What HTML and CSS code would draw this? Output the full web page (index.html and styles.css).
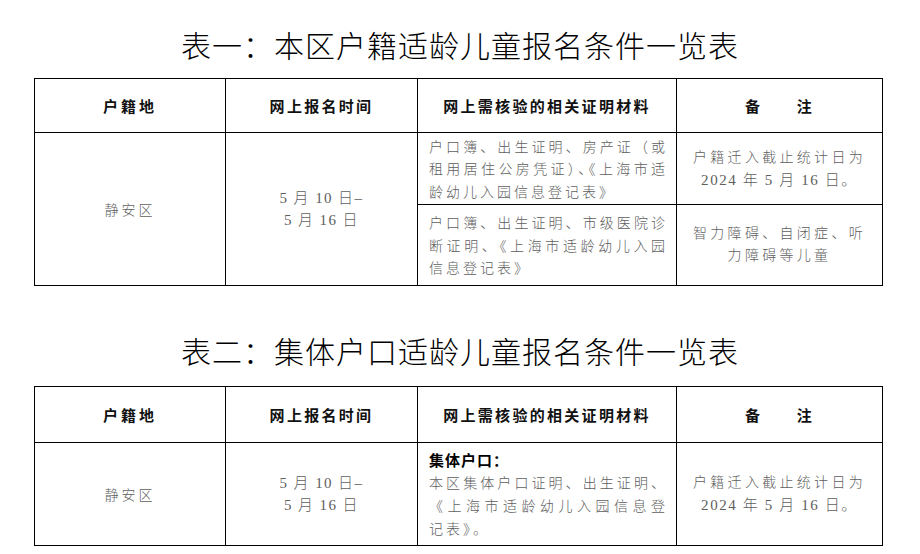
FILE: index.html
```html
<!DOCTYPE html>
<html lang="zh-CN">
<head>
<meta charset="utf-8">
<title>适龄儿童报名条件一览表</title>
<link rel="stylesheet" href="styles.css">
</head>
<body>
<main class="page">
  <h1 class="title title-first">表一：本区户籍适龄儿童报名条件一览表</h1>
  <table class="grid">
    <colgroup>
      <col class="c1"><col class="c2"><col class="c3"><col class="c4">
    </colgroup>
    <tr class="head head-1">
      <th class="h-place">户籍地</th>
      <th>网上报名时间</th>
      <th>网上需核验的相关证明材料</th>
      <th class="h-note">备　　注</th>
    </tr>
    <tr class="r1a">
      <td rowspan="2" class="place">静安区</td>
      <td rowspan="2" class="date"><span class="ln">5 月 10 日–</span><span class="ln">5 月 16 日</span></td>
      <td class="mat">
        <span class="jl">户口簿、出生证明、房产证（或</span>
        <span class="jl">租用居住公房凭证<span class="halt">）、《</span>上海市适</span>
        <span class="ll">龄幼儿入园信息登记表》</span>
      </td>
      <td class="note"><span class="ln">户籍迁入截止统计日为</span><span class="ln num">2024 年 5 月 16 日。</span></td>
    </tr>
    <tr class="r1b">
      <td class="mat">
        <span class="jl">户口簿、出生证明、市级医院诊</span>
        <span class="jl">断证明、《上海市适龄幼儿入园</span>
        <span class="ll">信息登记表》</span>
      </td>
      <td class="note"><span class="ln">智力障碍、自闭症、听</span><span class="ln">力障碍等儿童</span></td>
    </tr>
  </table>

  <h1 class="title title-second">表二：集体户口适龄儿童报名条件一览表</h1>
  <table class="grid">
    <colgroup>
      <col class="c1"><col class="c2"><col class="c3"><col class="c4">
    </colgroup>
    <tr class="head head-2">
      <th class="h-place">户籍地</th>
      <th>网上报名时间</th>
      <th>网上需核验的相关证明材料</th>
      <th class="h-note">备　　注</th>
    </tr>
    <tr class="r2">
      <td class="place">静安区</td>
      <td class="date"><span class="ln">5 月 10 日–</span><span class="ln">5 月 16 日</span></td>
      <td class="mat mat-2">
        <span class="ll strong">集体户口：</span>
        <span class="jl">本区集体户口证明、出生证明、</span>
        <span class="jl">《上海市适龄幼儿入园信息登</span>
        <span class="ll">记表》。</span>
      </td>
      <td class="note"><span class="ln">户籍迁入截止统计日为</span><span class="ln num">2024 年 5 月 16 日。</span></td>
    </tr>
  </table>
</main>
</body>
</html>
```

FILE: styles.css
```css
html, body {
  margin: 0;
  padding: 0;
  background: #ffffff;
}

body {
  font-family: "Liberation Serif", "Noto Sans CJK SC", serif;
  color: #000;
}

.page {
  width: 920px;
  display: flex;
  flex-direction: column;
}

.title {
  font-family: "Noto Sans CJK SC", sans-serif;
  font-weight: 300;
  font-size: 30px;
  letter-spacing: 1px;
  line-height: 40px;
  text-align: center;
  margin: 0;
  padding-left: 0;
  color: #000;
}

.title-first {
  margin-top: 24px;
  margin-bottom: 14px;
}

.title-second {
  margin-top: 44px;
  margin-bottom: 16px;
}

.grid {
  margin-left: 34px;
  width: 848px;
  border-collapse: collapse;
  table-layout: fixed;
}

.c1 { width: 191px; }
.c2 { width: 192px; }
.c3 { width: 259px; }
.c4 { width: 206px; }

.grid th,
.grid td {
  border: 1px solid #000;
  padding: 0;
  vertical-align: middle;
  text-align: center;
}

.grid th {
  font-family: "Noto Sans CJK SC", sans-serif;
  font-weight: 700;
  font-size: 15px;
  letter-spacing: 2.3px;
  color: #111;
}

.grid .h-place { letter-spacing: 3px; }

.head-1 { height: 54px; }
.head-2 { height: 56px; }
.r1a { height: 72px; }
.r1b { height: 81px; }
.r2 { height: 103px; }

.grid .place {
  font-family: "Noto Sans CJK SC", sans-serif;
  font-weight: 300;
  font-size: 14px;
  letter-spacing: 3px;
  color: #5e5e5e;
}

.grid .date {
  font-size: 15px;
  font-weight: 300;
  letter-spacing: 1.4px;
  color: #5e5e5e;
  line-height: 22px;
}

.ln {
  display: block;
}

.grid .mat {
  font-family: "Noto Sans CJK SC", sans-serif;
  font-weight: 300;
  font-size: 14px;
  color: #5e5e5e;
  line-height: 22.5px;
  text-align: left;
  padding: 0 11px 0 11px;
}

.grid .mat-2 {
  line-height: 23px;
}

.jl {
  display: block;
  text-align: justify;
  text-align-last: justify;
  text-justify: inter-character;
}

.ll {
  display: block;
  text-align: left;
  letter-spacing: 3px;
}

.halt {
  font-feature-settings: "halt" 1;
}

.grid .mat .strong {
  font-weight: 700;
  color: #000;
  font-size: 15px;
  letter-spacing: 1px;
}

.grid .note {
  font-family: "Liberation Serif", "Noto Sans CJK SC", sans-serif;
  font-weight: 300;
  font-size: 14px;
  letter-spacing: 3.3px;
  color: #5e5e5e;
  line-height: 22px;
}

.grid .note .num {
  font-size: 15px;
  letter-spacing: 1.6px;
}
```
